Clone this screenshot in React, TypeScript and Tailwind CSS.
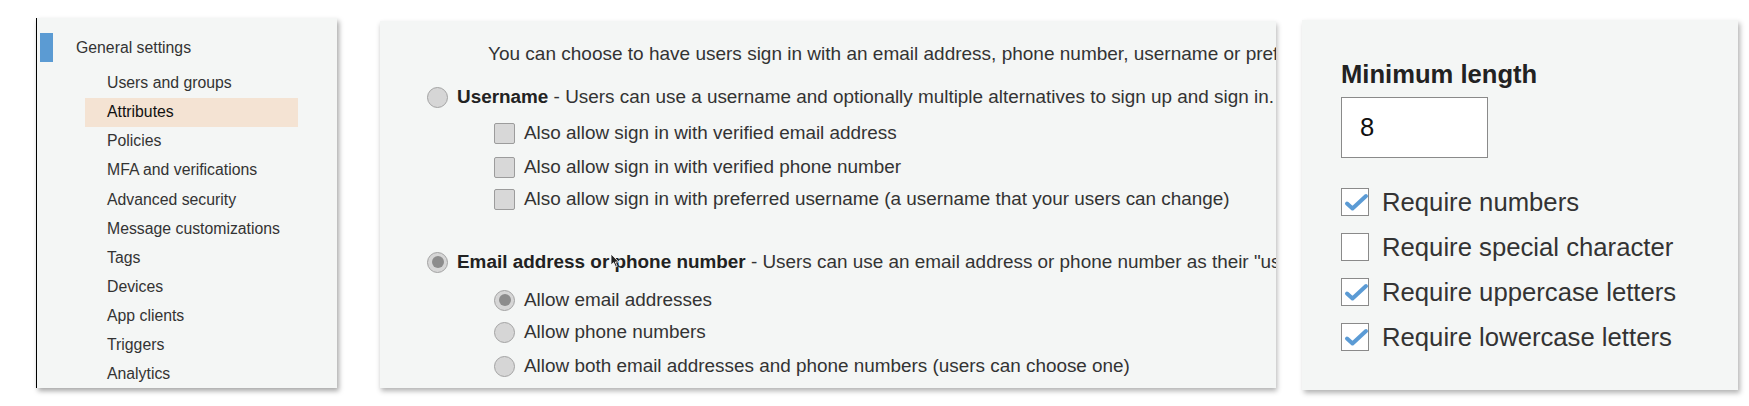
import React from "react";

const font = { fontFamily: '"Liberation Sans", Arial, sans-serif' };

const navItems = [
  "Users and groups",
  "Attributes",
  "Policies",
  "MFA and verifications",
  "Advanced security",
  "Message customizations",
  "Tags",
  "Devices",
  "App clients",
  "Triggers",
  "Analytics",
];

function Radio({ checked }: { checked?: boolean }) {
  return (
    <span className="flex h-[21px] w-[21px] shrink-0 items-center justify-center rounded-full border-[1.5px] border-[#a3a3a3] bg-[#d6d6d6]">
      {checked && <span className="h-[12px] w-[12px] rounded-full bg-[#8c8c8c]" />}
    </span>
  );
}

function GrayBox() {
  return <span className="h-[21px] w-[21px] shrink-0 rounded-[2px] border border-[#9c9c9c] bg-[#d8d8d8]" />;
}

function CheckBox({ checked }: { checked?: boolean }) {
  return (
    <span className="relative h-[28px] w-[28px] shrink-0 border-[1.5px] border-[#8a8a8a] bg-white">
      {checked && (
        <svg className="absolute left-0 top-0" width="28" height="28" viewBox="0 0 28 28">
          <path d="M5 14.5 L10.5 19.5 L24 7" fill="none" stroke="#5b9bd5" strokeWidth="4" strokeLinecap="round" strokeLinejoin="round" />
        </svg>
      )}
    </span>
  );
}

function Sidebar() {
  return (
    <div className="ml-[36px] mt-[18px] h-[370px] w-[301px] shrink-0 overflow-hidden border-l-[1.5px] border-black bg-[#f4f6f5] pt-[15px] shadow-[2px_3px_5px_rgba(0,0,0,0.35)]">
      <div className="flex h-[29px] items-center">
        <span className="ml-[3px] h-[29px] w-[13px] bg-[#5b9bd3]" />
        <span className="ml-[23px] text-[15.8px] text-[#333]">General settings</span>
      </div>
      <div className="mt-[6.5px] flex flex-col">
        {navItems.map((item) => (
          <div
            key={item}
            className={
              item === "Attributes"
                ? "ml-[48px] flex h-[29.1px] w-[213px] items-center bg-[#f4e3d3] pl-[22px] text-[15.8px] text-[#111]"
                : "ml-[48px] flex h-[29.1px] w-[213px] items-center pl-[22px] text-[15.8px] text-[#333]"
            }
          >
            {item}
          </div>
        ))}
      </div>
    </div>
  );
}

function SignInPanel() {
  return (
    <div className="relative ml-[43px] mt-[21px] h-[367px] w-[896px] shrink-0 overflow-hidden whitespace-nowrap bg-[#f4f6f5] text-[18.9px] text-[#333] shadow-[1px_3px_5px_rgba(0,0,0,0.3)]">
      <div className="box-content flex h-[32px] items-center pl-[108px] pt-[17px] text-[19px]">
        You can choose to have users sign in with an email address, phone number, username or preferred
      </div>
      <div className="mt-[11px] flex h-[32px] items-center gap-[9px] pl-[47px]">
        <Radio />
        <span>
          <b className="text-[#222]">Username</b> - Users can use a username and optionally multiple alternatives to sign up and sign in.
        </span>
      </div>
      <div className="mt-[4px] flex h-[32px] items-center gap-[9px] pl-[114px]">
        <GrayBox />
        <span>Also allow sign in with verified email address</span>
      </div>
      <div className="mt-[2px] flex h-[32px] items-center gap-[9px] pl-[114px]">
        <GrayBox />
        <span>Also allow sign in with verified phone number</span>
      </div>
      <div className="flex h-[32px] items-center gap-[9px] pl-[114px]">
        <GrayBox />
        <span>Also allow sign in with preferred username (a username that your users can change)</span>
      </div>
      <div className="mt-[31px] flex h-[32px] items-center gap-[9px] pl-[47px]">
        <Radio checked />
        <span>
          <b className="text-[#222]">Email address or phone number</b> - Users can use an email address or phone number as their "us
        </span>
      </div>
      <div className="mt-[6px] flex h-[32px] items-center gap-[9px] pl-[114px]">
        <Radio checked />
        <span>Allow email addresses</span>
      </div>
      <div className="flex h-[32px] items-center gap-[9px] pl-[114px]">
        <Radio />
        <span>Allow phone numbers</span>
      </div>
      <div className="mt-[2px] flex h-[32px] items-center gap-[9px] pl-[114px]">
        <Radio />
        <span>Allow both email addresses and phone numbers (users can choose one)</span>
      </div>
      {/* mouse pointer */}
      <svg className="absolute left-[230px] top-[232px]" width="10" height="15" viewBox="0 0 10 15">
        <path d="M1 1 L1 12 L3.6 9.6 L5.6 14 L7.2 13.3 L5.3 9 L8.8 9 Z" fill="#222" stroke="#fff" strokeWidth="0.8" />
      </svg>
    </div>
  );
}

function PasswordPanel() {
  return (
    <div className="ml-[26px] mt-[20px] h-[370px] w-[436px] shrink-0 overflow-hidden bg-[#f4f6f5] pl-[39px] pt-[38px] text-[#333] shadow-[2px_3px_5px_rgba(0,0,0,0.3)]">
      <div className="flex h-[32px] items-center text-[25.6px] font-bold text-[#222]">Minimum length</div>
      <div className="mt-[7px] flex h-[61px] w-[147px] items-center border-[1.5px] border-[#8a8a8a] bg-white pl-[18px] text-[25.6px] text-[#111]">
        8
      </div>
      <div className="mt-[26px] flex flex-col gap-[9px]">
        {[
          ["Require numbers", true],
          ["Require special character", false],
          ["Require uppercase letters", true],
          ["Require lowercase letters", true],
        ].map(([label, on]) => (
          <div key={label as string} className="flex h-[36px] items-center gap-[13px] text-[25.7px]">
            <CheckBox checked={on as boolean} />
            <span>{label as string}</span>
          </div>
        ))}
      </div>
    </div>
  );
}

export default function App() {
  return (
    <div className="flex h-[406px] w-[1749px] items-start overflow-hidden bg-white" style={font}>
      <Sidebar />
      <SignInPanel />
      <PasswordPanel />
    </div>
  );
}
